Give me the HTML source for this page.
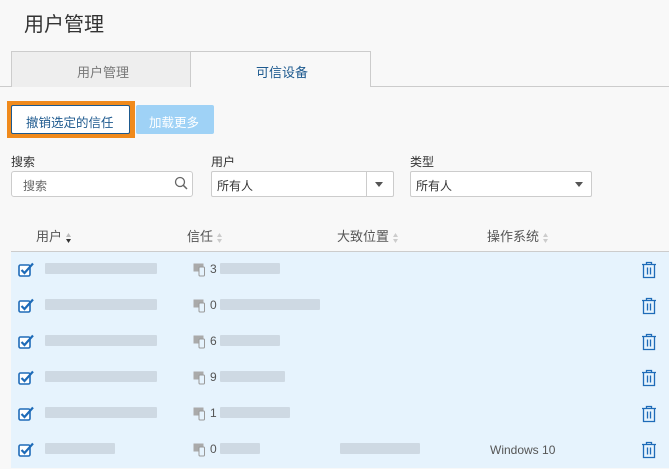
<!DOCTYPE html>
<html><head><meta charset="utf-8"><style>
*{margin:0;padding:0;box-sizing:border-box}
body{width:669px;height:469px;overflow:hidden;background:#f8f8f8;font-family:"Liberation Sans","Noto Sans CJK SC",sans-serif;color:#333;position:relative}
.a{position:absolute}
.t{font-size:12px;white-space:nowrap}
.blur{position:absolute;background:#c6d0d9;opacity:.75;height:11px;border-radius:1px}
.row{position:absolute;left:11px;width:658px;height:36px;background:#e6f3fd}
.sel{position:absolute;background:#fff;border:1px solid #ccc;border-radius:3px;height:26px}
.so{display:inline-block;vertical-align:middle;margin-left:3px}
</style></head><body>
<div class="a" style="left:24px;top:8px;font-size:20px;color:#333">用户管理</div>
<div class="a" style="left:0;top:86px;width:669px;height:1px;background:#ccc"></div>
<div class="a" style="left:11px;top:51px;width:180px;height:36px;background:#eee;border:1px solid #ccc;border-bottom:none"></div>
<div class="a t" style="left:77px;top:62px;font-size:13px;color:#777">用户管理</div>
<div class="a" style="left:191px;top:51px;width:180px;height:36px;background:#f8f8f8;border:1px solid #ccc;border-left:none;border-bottom:none"></div>
<div class="a t" style="left:256px;top:62px;font-size:13px;color:#1e5a8f">可信设备</div>
<div class="a" style="left:7px;top:101px;width:128px;height:37px;background:#f08a1c"></div>
<div class="a" style="left:11px;top:105px;width:119px;height:29px;background:#fff;border:1px solid #1e5a8f;border-radius:2px"></div>
<div class="a t" style="left:26px;top:112px;font-size:12.5px;color:#1e5a8f">撤销选定的信任</div>
<div class="a" style="left:136px;top:105px;width:78px;height:29px;background:#9fd2f6;border-radius:2px"></div>
<div class="a t" style="left:149px;top:112px;font-size:12.5px;color:#fff">加载更多</div>
<div class="a t" style="left:11px;top:153px">搜索</div>
<div class="a t" style="left:211px;top:153px">用户</div>
<div class="a t" style="left:410px;top:153px">类型</div>
<div class="sel" style="left:11px;top:171px;width:182px"></div>
<div class="a t" style="left:23px;top:177px;color:#666">搜索</div>
<svg class="a" style="left:174px;top:176px" width="14" height="14"><circle cx="6" cy="6" r="4.5" fill="none" stroke="#666" stroke-width="1.3"/><line x1="9.3" y1="9.3" x2="13" y2="13" stroke="#666" stroke-width="1.5"/></svg>
<div class="sel" style="left:211px;top:171px;width:183px;border-radius:2px"></div>
<div class="a" style="left:366px;top:172px;width:1px;height:24px;background:#ccc"></div>
<div class="a t" style="left:217px;top:177px">所有人</div>
<div class="a" style="left:375px;top:182px;border:4px solid transparent;border-top:5px solid #555"></div>
<div class="sel" style="left:410px;top:171px;width:182px;border-radius:2px"></div>
<div class="a t" style="left:416px;top:177px">所有人</div>
<div class="a" style="left:575px;top:182px;border:4px solid transparent;border-top:5px solid #555"></div>
<div class="a" style="left:11px;top:251px;width:658px;height:1px;background:#ccc"></div>
<div class="a t" style="left:36px;top:226px;font-size:13px;color:#555">用户<svg class="so" width="7" height="12"><path d="M3.5 1L6 5H1Z" fill="#bbb"/><path d="M3.5 11L6 7H1Z" fill="#333"/></svg></div>
<div class="a t" style="left:187px;top:226px;font-size:13px;color:#555">信任<svg class="so" width="7" height="12"><path d="M3.5 1L6 5H1Z" fill="#ccc"/><path d="M3.5 11L6 7H1Z" fill="#ccc"/></svg></div>
<div class="a t" style="left:337px;top:226px;font-size:13px;color:#555">大致位置<svg class="so" width="7" height="12"><path d="M3.5 1L6 5H1Z" fill="#ccc"/><path d="M3.5 11L6 7H1Z" fill="#ccc"/></svg></div>
<div class="a t" style="left:487px;top:226px;font-size:13px;color:#555">操作系统<svg class="so" width="7" height="12"><path d="M3.5 1L6 5H1Z" fill="#ccc"/><path d="M3.5 11L6 7H1Z" fill="#ccc"/></svg></div>
<div id="rows"></div>
<script>
var ch=['3','0','6','9','1','0'],w=[112,112,112,112,112,70],w2=[60,100,60,65,70,40];
var h='';
for(var i=0;i<6;i++){var y=252+i*36,c=y+18;
h+='<div class="row" style="top:'+y+'px"></div>';
h+='<svg class="a" style="left:18px;top:'+(c-8)+'px" width="17" height="15"><rect x="1" y="3" width="11" height="11" rx="1.5" fill="#fff" stroke="#1e6bb8" stroke-width="1.6"/><path d="M3.5 8 L6.5 11 L15 1.5" fill="none" stroke="#1e6bb8" stroke-width="2.2"/></svg>';
h+='<div class="blur" style="left:45px;top:'+(c-7)+'px;width:'+w[i]+'px"></div>';
h+='<svg class="a" style="left:193px;top:'+(c-7)+'px" width="14" height="14"><rect x="0.5" y="0.5" width="10" height="8" fill="#aaa"/><rect x="6" y="4" width="5.5" height="9" rx="1" fill="#e6f3fd" stroke="#999"/></svg>';
h+='<div class="a t" style="left:210px;top:'+(c-8)+'px;color:#555">'+ch[i]+'</div>';
h+='<div class="blur" style="left:220px;top:'+(c-7)+'px;width:'+w2[i]+'px"></div>';
h+='<svg class="a" style="left:641px;top:'+(c-9)+'px" width="16" height="18"><path d="M1 3.5H15M5.5 3.5V1.5H10.5V3.5M2.5 3.5V16.5H13.5V3.5M6.5 6.5V13.5M9.5 6.5V13.5" fill="none" stroke="#1e6bb8" stroke-width="1.3"/></svg>';
}
h+='<div class="blur" style="left:340px;top:443px;width:80px"></div>';
h+='<div class="a t" style="left:490px;top:443px;color:#555">Windows 10</div>';
document.getElementById('rows').innerHTML=h;
</script>
</body></html>
